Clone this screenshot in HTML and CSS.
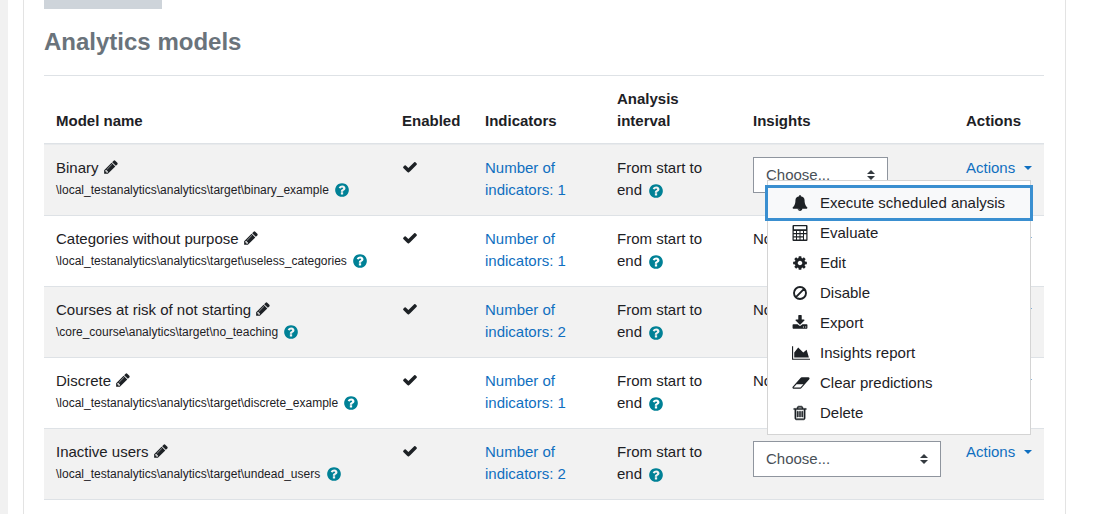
FILE: index.html
```html
<!DOCTYPE html>
<html lang="en">
<head>
<meta charset="utf-8">
<meta name="viewport" content="width=device-width, initial-scale=1">
<title>Analytics models</title>
<link rel="stylesheet" href="styles.css">
</head>
<body>
<svg class="sprite" aria-hidden="true">
  <symbol id="pencil" viewBox="0 0 1792 1792"><path d="M491 1536l91-91-235-235-91 91v107h128v128h107zm523-928q0-22-22-22-10 0-17 7l-542 542q-7 7-7 17 0 22 22 22 10 0 17-7l542-542q7-7 7-17zm-54-192l416 416-832 832h-416v-416zm683 96q0 53-37 90l-166 166-416-416 166-165q36-38 90-38 53 0 91 38l235 234q37 39 37 91z"/></symbol>
  <symbol id="check" viewBox="0 0 1792 1792"><path d="M1671 566q0 40-28 68l-724 724-136 136q-28 28-68 28t-68-28l-136-136-362-362q-28-28-28-68t28-68l136-136q28-28 68-28t68 28l294 295 656-657q28-28 68-28t68 28l136 136q28 28 28 68z"/></symbol>
  <symbol id="help" viewBox="0 0 1792 1792"><path d="M1024 1376v-192q0-14-9-23t-23-9h-192q-14 0-23 9t-9 23v192q0 14 9 23t23 9h192q14 0 23-9t9-23zm256-672q0-88-55.5-163t-138.5-116-170-41q-243 0-371 213-15 24 8 42l132 100q7 6 19 6 16 0 25-12 53-68 86-92 34-24 86-24 48 0 85.5 26t37.5 59q0 38-20 61t-68 45q-63 28-115.5 86.5t-52.5 125.5v36q0 14 9 23t23 9h192q14 0 23-9t9-23q0-19 21.5-49.5t54.5-49.5q32-18 49-28.5t46-35 44.5-48 28-60.5 12.5-81zm384 192q0 209-103 385.5t-279.5 279.5-385.5 103-385.5-103-279.5-279.5-103-385.5 103-385.5 279.5-279.5 385.5-103 385.5 103 279.5 279.5 103 385.5z"/></symbol>
  <symbol id="bell" viewBox="0 0 1792 1792"><path d="M912 1696q0-16-16-16-59 0-101.5-42.5t-42.5-101.5q0-16-16-16t-16 16q0 73 51.5 124.5t124.5 51.5q16 0 16-16zm816-288q0 52-38 90t-90 38h-448q0 106-75 181t-181 75-181-75-75-181h-448q-52 0-90-38t-38-90q50-42 91-88t85-119.5 74.5-158.5 50-206 19.5-260q0-152 117-282.5t307-158.5q-8-19-8-39 0-40 28-68t68-28 68 28 28 68q0 20-8 39 190 28 307 158.5t117 282.5q0 139 19.5 260t50 206 74.5 158.5 85 119.5 91 88z"/></symbol>
  <symbol id="calculator" viewBox="0 0 16 16"><path fill-rule="evenodd" d="M1.500 0h13q1 0 1 1v14q0 1-1 1h-13q-1 0-1-1V1q0-1 1-1zM2 1.300v3h12v-3zM1.700 6v2h2.300V6zM5 6v2h2.500V6zM8.500 6v2H11V6zM12 6v2h2.300V6zM1.700 9.200v2h2.300v-2zM5 9.200v2h2.500v-2zM8.500 9.200v2H11v-2zM1.700 12.400v2.200h2.300v-2.200zM5 12.400v2.200h2.500v-2.200zM8.500 12.400v2.200H11v-2.200zM12 9.200v5.400h2.300V9.200z"/></symbol>
  <symbol id="cog" viewBox="0 0 1792 1792"><path d="M1152 896q0-106-75-181t-181-75-181 75-75 181 75 181 181 75 181-75 75-181zm512-109v222q0 12-8 23t-20 13l-185 28q-19 54-39 91 35 50 107 138 10 12 10 25t-9 23q-27 37-99 108t-94 71q-12 0-26-9l-138-108q-44 23-91 38-16 136-29 186-7 28-36 28h-222q-14 0-24.5-8.5t-11.5-21.5l-28-184q-49-16-90-37l-141 107q-10 9-25 9-14 0-25-11-126-114-165-168-7-10-7-23 0-12 8-23 15-21 51-66.5t54-70.5q-27-50-41-99l-183-27q-13-2-21-12.5t-8-23.5v-222q0-12 8-23t19-13l186-28q14-46 39-92-40-57-107-138-10-12-10-24 0-10 9-23 26-36 98.500-107.500t94.500-71.500q13 0 26 10l138 107q44-23 91-38 16-136 29-186 7-28 36-28h222q14 0 24.500 8.500t11.500 21.500l28 184q49 16 90 37l142-107q9-9 24-9 13 0 25 10 129 119 165 170 7 8 7 22 0 12-8 23-15 21-51 66.500t-54 70.500q26 50 41 98l183 28q13 2 21 12.500t8 23.500z"/></symbol>
  <symbol id="ban" viewBox="0 0 16 16"><path fill="none" stroke="currentColor" stroke-width="1.900" d="M14 8A6 6 0 1 1 2 8a6 6 0 0 1 12 0zM3.700 12.300l8.600-8.600"/></symbol>
  <symbol id="download" viewBox="0 0 1792 1792"><path d="M1344 1344q0-26-19-45t-45-19-45 19-19 45 19 45 45 19 45-19 19-45zm256 0q0-26-19-45t-45-19-45 19-19 45 19 45 45 19 45-19 19-45zm128-224v320q0 40-28 68t-68 28h-1472q-40 0-68-28t-28-68v-320q0-40 28-68t68-28h465l135 136q58 56 136 56t136-56l136-136h464q40 0 68 28t28 68zm-325-569q17 41-14 70l-448 448q-18 19-45 19t-45-19l-448-448q-31-29-14-70 17-39 59-39h256v-448q0-26 19-45t45-19h256q26 0 45 19t19 45v448h256q42 0 59 39z"/></symbol>
  <symbol id="area" viewBox="0 0 2048 1792"><path d="M2048 1536v128h-2048v-1536h128v1408h1920zm-384-1024l256 896h-1664v-576l448-576 576 576z"/></symbol>
  <symbol id="eraser" viewBox="0 0 1920 1792"><path d="M896 1408l336-384h-768l-336 384h768zm1013-1077q15 34 9.500 71.500t-30.500 65.500l-896 1024q-38 44-96 44h-768q-38 0-69.500-20.500t-47.500-54.500q-15-34-9.500-71.500t30.500-65.500l896-1024q38-44 96-44h768q38 0 69.500 20.500t47.500 54.500z"/></symbol>
  <symbol id="trash" viewBox="0 0 1792 1792"><path stroke="currentColor" stroke-width="60" d="M704 736v576q0 14-9 23t-23 9h-64q-14 0-23-9t-9-23v-576q0-14 9-23t23-9h64q14 0 23 9t9 23zm256 0v576q0 14-9 23t-23 9h-64q-14 0-23-9t-9-23v-576q0-14 9-23t23-9h64q14 0 23 9t9 23zm256 0v576q0 14-9 23t-23 9h-64q-14 0-23-9t-9-23v-576q0-14 9-23t23-9h64q14 0 23 9t9 23zm128 724v-948h-896v948q0 22 7 40.500t14.500 27 10.500 8.500h832q3 0 10.500-8.500t14.500-27 7-40.500zm-672-1076h448l-48-117q-7-9-17-11h-317q-10 2-17 11zm928 32v64q0 14-9 23t-23 9h-96v948q0 83-47 143.500t-113 60.500h-832q-66 0-113-58.500t-47-141.500v-952h-96q-14 0-23-9t-9-23v-64q0-14 9-23t23-9h309l70-167q15-37 54-63t79-26h320q40 0 79 26t54 63l70 167h309q14 0 23 9t9 23z"/></symbol>
  <symbol id="sort" viewBox="0 0 8 10"><path d="M4 0l4 4H0zM4 10L0 6h8z"/></symbol>
</svg>
<main class="card">
  <div class="toolbar-end"></div>
  <h2 class="title">Analytics models</h2>
  <table class="models">
    <colgroup><col class="col-name"><col class="col-enabled"><col class="col-indicators"><col class="col-interval"><col class="col-insights"><col class="col-actions"></colgroup>
    <thead>
      <tr><th scope="col">Model name</th><th scope="col">Enabled</th><th scope="col">Indicators</th><th scope="col">Analysis interval</th><th scope="col">Insights</th><th scope="col">Actions</th></tr>
    </thead>
    <tbody>
      <tr>
        <td>Binary <a class="edit" href="#" aria-label="Edit Binary"><svg class="icon"><use href="#pencil"/></svg></a><div class="target">\local_testanalytics\analytics\target\binary_example <a class="help" href="#" aria-label="Help"><svg class="icon"><use href="#help"/></svg></a></div></td>
        <td><svg class="icon" role="img" aria-label="Yes"><use href="#check"/></svg></td>
        <td><a href="#">Number of indicators: 1</a></td>
        <td>From start to end <a class="help" href="#" aria-label="Help"><svg class="icon"><use href="#help"/></svg></a></td>
        <td><div class="picker"><select aria-label="Insights for Binary"><option>Choose...</option></select><svg class="sort"><use href="#sort"/></svg></div></td>
        <td>
          <div class="dropdown">
            <a class="toggle" href="#" aria-expanded="true">Actions</a>
            <div class="menu">
              <a class="item focused" href="#"><svg class="icon"><use href="#bell"/></svg>Execute scheduled analysis</a>
              <a class="item" href="#"><svg class="icon"><use href="#calculator"/></svg>Evaluate</a>
              <a class="item" href="#"><svg class="icon"><use href="#cog"/></svg>Edit</a>
              <a class="item" href="#"><svg class="icon"><use href="#ban"/></svg>Disable</a>
              <a class="item" href="#"><svg class="icon"><use href="#download"/></svg>Export</a>
              <a class="item" href="#"><svg class="icon wide"><use href="#area"/></svg>Insights report</a>
              <a class="item" href="#"><svg class="icon wide"><use href="#eraser"/></svg>Clear predictions</a>
              <a class="item" href="#"><svg class="icon"><use href="#trash"/></svg>Delete</a>
            </div>
          </div>
        </td>
      </tr>
      <tr>
        <td>Categories without purpose <a class="edit" href="#" aria-label="Edit Categories without purpose"><svg class="icon"><use href="#pencil"/></svg></a><div class="target">\local_testanalytics\analytics\target\useless_categories <a class="help" href="#" aria-label="Help"><svg class="icon"><use href="#help"/></svg></a></div></td>
        <td><svg class="icon" role="img" aria-label="Yes"><use href="#check"/></svg></td>
        <td><a href="#">Number of indicators: 1</a></td>
        <td>From start to end <a class="help" href="#" aria-label="Help"><svg class="icon"><use href="#help"/></svg></a></td>
        <td>No</td>
        <td><div class="dropdown"><a class="toggle" href="#" aria-label="Actions"></a></div></td>
      </tr>
      <tr>
        <td>Courses at risk of not starting <a class="edit" href="#" aria-label="Edit Courses at risk of not starting"><svg class="icon"><use href="#pencil"/></svg></a><div class="target">\core_course\analytics\target\no_teaching <a class="help" href="#" aria-label="Help"><svg class="icon"><use href="#help"/></svg></a></div></td>
        <td><svg class="icon" role="img" aria-label="Yes"><use href="#check"/></svg></td>
        <td><a href="#">Number of indicators: 2</a></td>
        <td>From start to end <a class="help" href="#" aria-label="Help"><svg class="icon"><use href="#help"/></svg></a></td>
        <td>No</td>
        <td><div class="dropdown"><a class="toggle" href="#" aria-label="Actions"></a></div></td>
      </tr>
      <tr>
        <td>Discrete <a class="edit" href="#" aria-label="Edit Discrete"><svg class="icon"><use href="#pencil"/></svg></a><div class="target">\local_testanalytics\analytics\target\discrete_example <a class="help" href="#" aria-label="Help"><svg class="icon"><use href="#help"/></svg></a></div></td>
        <td><svg class="icon" role="img" aria-label="Yes"><use href="#check"/></svg></td>
        <td><a href="#">Number of indicators: 1</a></td>
        <td>From start to end <a class="help" href="#" aria-label="Help"><svg class="icon"><use href="#help"/></svg></a></td>
        <td>No</td>
        <td><div class="dropdown"><a class="toggle" href="#" aria-label="Actions"></a></div></td>
      </tr>
      <tr>
        <td>Inactive users <a class="edit" href="#" aria-label="Edit Inactive users"><svg class="icon"><use href="#pencil"/></svg></a><div class="target">\local_testanalytics\analytics\target\undead_users <a class="help" href="#" aria-label="Help"><svg class="icon"><use href="#help"/></svg></a></div></td>
        <td><svg class="icon" role="img" aria-label="Yes"><use href="#check"/></svg></td>
        <td><a href="#">Number of indicators: 2</a></td>
        <td>From start to end <a class="help" href="#" aria-label="Help"><svg class="icon"><use href="#help"/></svg></a></td>
        <td><div class="picker picker-wide"><select aria-label="Insights for Inactive users"><option>Choose...</option></select><svg class="sort"><use href="#sort"/></svg></div></td>
        <td><div class="dropdown"><a class="toggle" href="#">Actions</a></div></td>
      </tr>
    </tbody>
  </table>
</main>
</body>
</html>
```
FILE: styles.css
```css
* { box-sizing: border-box; }

body {
  margin: 0;
  min-height: 100vh;
  display: flex;
  padding: 0 34px 0 15px;
  border-left: 8px solid #f1f1f1;
  background: #fff;
  color: #1d2125;
  font: 15px/22px "Liberation Sans", Arial, sans-serif;
}

a { color: #0f6fc0; text-decoration: none; }

.sprite { display: none; }

.card {
  flex: 1;
  min-width: 0;
  padding: 0 21px 14px 20px;
  border: solid #e3e3e3;
  border-width: 0 1px;
}

.toolbar-end { width: 118px; height: 9px; background: #ced4da; }

.title {
  margin: 18px 0;
  color: #6a737b;
  font-size: 24px;
  line-height: 30px;
}

.models {
  width: 100%;
  table-layout: fixed;
  border-collapse: separate;
  border-spacing: 0;
  border-bottom: 1px solid #dee2e6;
}

.col-name { width: 34.6%; }
.col-enabled { width: 8.3%; }
.col-indicators { width: 13.2%; }
.col-interval { width: 13.6%; }
.col-insights { width: 21.3%; }
.col-actions { width: 9%; }

.models th,
.models td {
  padding: 12px;
  border-top: 1px solid #dee2e6;
  text-align: left;
  vertical-align: top;
}

.models th {
  padding-bottom: 11px;
  border-bottom: 1px solid #dee2e6;
  vertical-align: bottom;
}

.models td { height: 71px; padding-bottom: 10px; }
.models tbody tr:first-child td { border-top-color: #e8eaec; }
.models tbody tr:nth-child(odd) { background: #f2f2f2; }

.icon {
  width: 16px;
  height: 16px;
  fill: currentColor;
  vertical-align: -2px;
}

.edit { color: inherit; }
.help { color: #008196; margin-left: 2px; }
.help .icon { vertical-align: -4px; }
.target { font-size: 12px; }

.picker { position: relative; width: 135px; }
.picker-wide { width: 188px; }

.picker select {
  display: block;
  width: 100%;
  height: 36px;
  padding: 0 12px;
  appearance: none;
  border: 1px solid #8f959e;
  border-radius: 0;
  background: #fff;
  color: #495057;
  font: inherit;
}

.sort {
  position: absolute;
  top: 13px;
  right: 13px;
  width: 8px;
  height: 10px;
  fill: #343a40;
  pointer-events: none;
}

.dropdown { position: relative; white-space: nowrap; }

.toggle {
  display: flex;
  min-height: 22px;
  justify-content: space-between;
  align-items: center;
}

.toggle::after {
  content: "";
  margin-left: auto;
  border: solid transparent;
  border-width: 4px 4px 0;
  border-top-color: currentColor;
}

.menu {
  position: absolute;
  z-index: 1;
  top: 23px;
  right: 1px;
  width: 264px;
  padding: 7px 0 6px;
  border: 1px solid #d4d4d4;
  background: #fff;
}

.item {
  display: flex;
  align-items: center;
  gap: 12px;
  padding: 4px 24px;
  color: #1d2125;
}

.item.focused {
  background: #f8f9fa;
  box-shadow: 0 0 0 3px #3a8fd0;
}

.item .icon { flex: none; }
.item .wide { width: 18px; margin-right: -2px; }
```
